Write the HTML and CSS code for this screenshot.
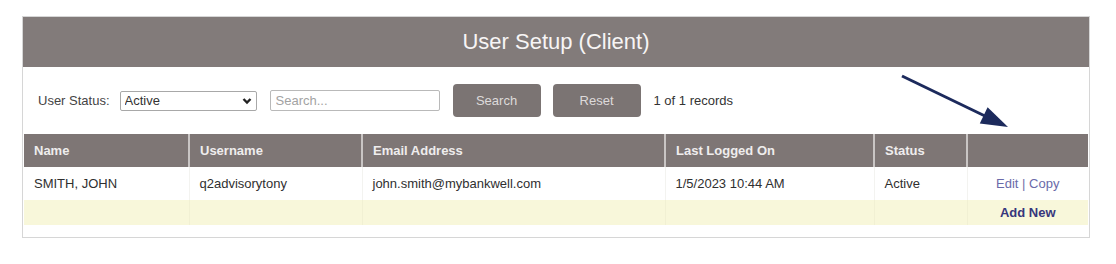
FILE: index.html
```html
<!DOCTYPE html>
<html>
<head>
<meta charset="utf-8">
<link rel="stylesheet" href="styles.css">
</head>
<body>
<div class="page">
  <div class="panel">
    <div class="title-bar">User Setup (Client)</div>
    <div class="filters">
      <label class="status-label">User Status:</label>
      <div class="select-wrap">
        <select class="status-select"><option>Active</option></select>
        <svg class="chevron" width="10" height="8" viewBox="0 0 10 8"><path d="M1.5 2 L5 5.5 L8.5 2" fill="none" stroke="#222" stroke-width="2.4"/></svg>
      </div>
      <input class="search-input" type="text" placeholder="Search...">
      <button class="btn">Search</button>
      <button class="btn">Reset</button>
      <span class="records">1 of 1 records</span>
    </div>
    <table class="grid">
      <colgroup>
        <col class="c-name"><col class="c-user"><col class="c-email"><col class="c-last"><col class="c-status"><col class="c-act">
      </colgroup>
      <thead>
        <tr><th>Name</th><th>Username</th><th>Email Address</th><th>Last Logged On</th><th>Status</th><th></th></tr>
      </thead>
      <tbody>
        <tr class="row"><td>SMITH, JOHN</td><td>q2advisorytony</td><td>john.smith@mybankwell.com</td><td>1/5/2023 10:44 AM</td><td>Active</td><td class="act"><a class="lnk">Edit</a> | <a class="lnk">Copy</a></td></tr>
        <tr class="add-row"><td></td><td></td><td></td><td></td><td></td><td class="act"><a class="add">Add New</a></td></tr>
      </tbody>
    </table>
  </div>
  <svg class="arrow" width="1116" height="264" viewBox="0 0 1116 264">
    <line x1="902" y1="76" x2="986" y2="116.5" stroke="#1c2a5c" stroke-width="3"/>
    <polygon points="1008,127 979.8,123.4 987.6,107.2" fill="#1c2a5c"/>
  </svg>
</div>
</body>
</html>
```

FILE: styles.css
```css
html, body {
  margin: 0;
  padding: 0;
  background: #ffffff;
}
.page {
  padding: 16px 0 0 22px;
  font-family: "Liberation Sans", Arial, sans-serif;
  font-size: 13px;
  color: #333333;
}
.panel {
  width: 1068px;
  box-sizing: border-box;
  border: 1px solid #d6d6d6;
  padding-bottom: 12px;
  background: #ffffff;
}
.title-bar {
  height: 50px;
  line-height: 50px;
  background: #827b7a;
  color: #f7f5f5;
  font-size: 22px;
  text-align: center;
}
.filters {
  height: 67px;
  display: flex;
  align-items: center;
  padding-left: 15px;
}
.status-label {
  color: #444;
  margin-right: 10px;
}
.select-wrap {
  position: relative;
  width: 137px;
  height: 20px;
  margin-right: 13px;
}
.status-select {
  appearance: none;
  -webkit-appearance: none;
  width: 137px;
  height: 20px;
  box-sizing: border-box;
  border: 1px solid #a8a8a8;
  border-radius: 2px;
  background: #fff;
  font-family: "Liberation Sans", Arial, sans-serif;
  font-size: 13px;
  color: #333;
  padding: 0 0 0 4px;
  margin: 0;
}
.chevron {
  position: absolute;
  right: 5px;
  top: 6px;
}
.search-input {
  width: 170px;
  height: 21px;
  box-sizing: border-box;
  border: 1px solid #b9b9b9;
  border-radius: 2px;
  padding: 0 5px;
  margin: 0 13px 0 0;
  font-family: "Liberation Sans", Arial, sans-serif;
  font-size: 13px;
}
.search-input::placeholder {
  color: #a3a3a3;
}
.btn {
  width: 88px;
  height: 33px;
  border: none;
  border-radius: 4px;
  background: #7b7473;
  color: #dddada;
  font-family: "Liberation Sans", Arial, sans-serif;
  font-size: 13px;
  margin: 0 12px 0 0;
  padding: 0;
}
.records {
  margin-left: 1px;
  color: #333;
}
.grid {
  width: 1064px;
  margin: 0 1px;
  table-layout: fixed;
  border-collapse: collapse;
}
.c-name { width: 165px; }
.c-user { width: 173px; }
.c-email { width: 303px; }
.c-last { width: 209px; }
.c-status { width: 93px; }
.c-act { width: 121px; }
.grid th {
  height: 33px;
  padding: 0 10px;
  background: #7e7675;
  color: #efeded;
  font-weight: bold;
  text-align: left;
  border-left: 2px solid #c9c5c4;
}
.grid th:first-child { border-left: none; }
.grid td {
  padding: 0 10px;
  border-left: 1px solid #f3f3f0;
}
.grid td:first-child { border-left: none; }
.row td {
  height: 33px;
  color: #2f2f2f;
}
.add-row td {
  height: 25px;
  background: #f8f7da;
  border-left: 1px solid #f1f0d3;
}
.grid td.act {
  text-align: center;
  color: #7070a8;
}
.lnk {
  color: #6a6aa9;
}
.add {
  color: #36367c;
  font-weight: bold;
}
.arrow {
  position: absolute;
  left: 0;
  top: 0;
  pointer-events: none;
}
```
